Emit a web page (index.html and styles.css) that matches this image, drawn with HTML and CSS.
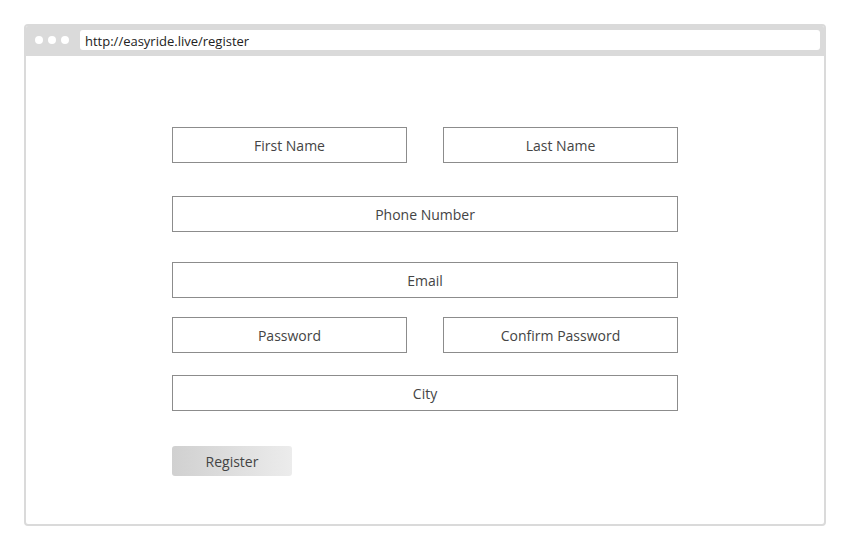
FILE: index.html
```html
<!DOCTYPE html>
<html>
<head>
<meta charset="utf-8">
<link rel="stylesheet" href="styles.css">
</head>
<body>
<div class="window">
  <div class="topbar">
    <div class="dots"><span class="dot"></span><span class="dot"></span><span class="dot"></span></div>
    <div class="url">http://easyride.live/register</div>
  </div>
  <div class="content">
    <div class="form">
      <div class="row r1">
        <div class="field">First Name</div>
        <div class="field">Last Name</div>
      </div>
      <div class="row r2"><div class="field">Phone Number</div></div>
      <div class="row r3"><div class="field">Email</div></div>
      <div class="row r4">
        <div class="field">Password</div>
        <div class="field">Confirm Password</div>
      </div>
      <div class="row r5"><div class="field">City</div></div>
      <div class="row r6"><button class="btn">Register</button></div>
    </div>
  </div>
</div>
</body>
</html>
```

FILE: styles.css
```css
* { box-sizing: border-box; }
html, body { margin: 0; padding: 0; background: #fff; }
body { font-family: "Open Sans", "Noto Sans", sans-serif; color: #444; }
.window {
  margin: 24px 0 0 24px;
  width: 802px;
  height: 502px;
  border: 2px solid #dadada;
  border-radius: 4px;
  overflow: hidden;
}
.topbar {
  height: 30px;
  background: #dadada;
  display: flex;
  align-items: center;
  padding: 0 4px 2px 9px;
}
.dots { display: flex; gap: 5px; width: 45px; }
.dot { width: 8px; height: 8px; border-radius: 50%; background: #fff; }
.url {
  flex: 1;
  height: 20px;
  background: #fff;
  border-radius: 3px;
  font-size: 13px;
  line-height: 20px;
  padding: 1px 0 0 5px;
  color: #222;
}
.content { padding: 71px 0 0 146px; }
.form { width: 506px; }
.row { display: flex; justify-content: space-between; }
.field {
  flex: 1;
  height: 36px;
  border: 1px solid #8c8c8c;
  display: flex;
  align-items: center;
  justify-content: center;
  font-size: 14px;
  color: #444;
}
.r1 .field, .r4 .field { flex: 0 0 235px; }
.r2 { margin-top: 33px; }
.r3 { margin-top: 30px; }
.r4 { margin-top: 19px; }
.r5 { margin-top: 22px; }
.r6 { margin-top: 35px; }
.btn {
  width: 120px;
  height: 30px;
  border: none;
  border-radius: 3px;
  background: linear-gradient(to right, #d0d0d0, #ececec);
  font-family: "Open Sans", "Noto Sans", sans-serif;
  font-size: 14px;
  color: #444;
  padding: 0;
}
```
